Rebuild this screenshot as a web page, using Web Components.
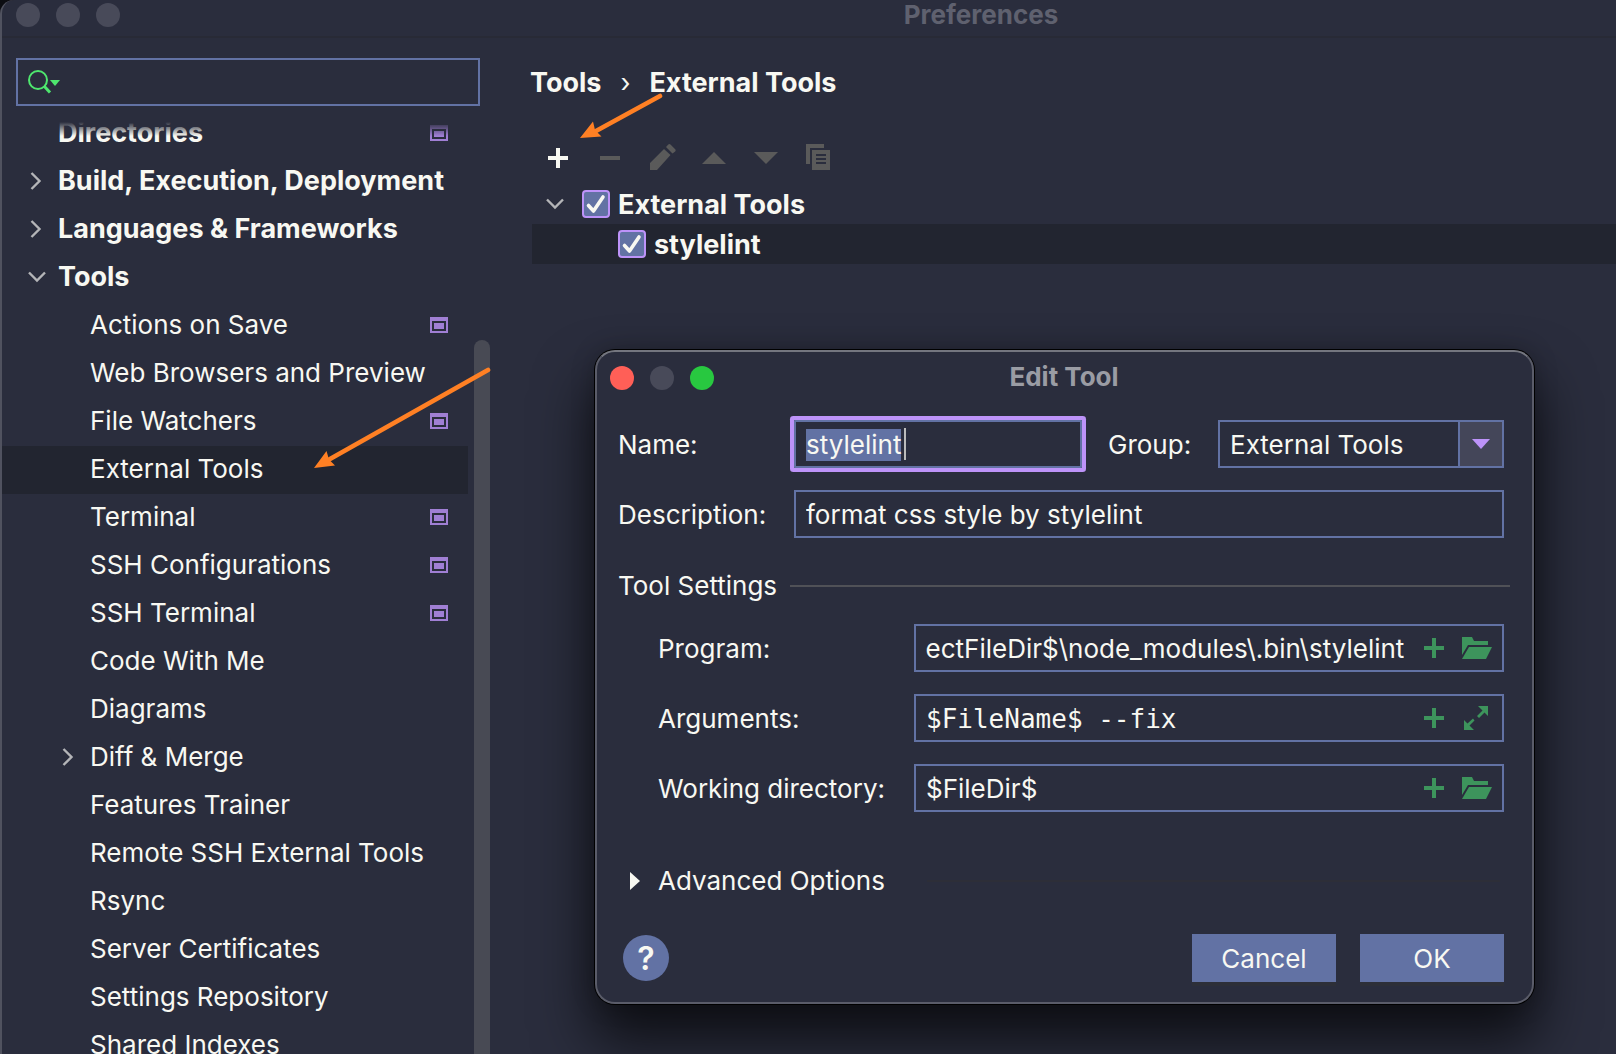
<!DOCTYPE html>
<html lang="en">
<head>
<meta charset="utf-8">
<title>Preferences</title>
<style>
  :root {
    --bg: #2a2d3d;
    --selected: #222530;
    --text: #f8f8f2;
    --line: #6272a4;
    --accent: #bd93f9;
    --badge: #a07fd4;
    --green: #3d945c;
    --disabled: #5a5a5a;
    --muted: #b4b5b8;
    --strong: 27px;
  }
  html, body { height: 100%; }
  body {
    margin: 0;
    overflow: hidden;
    background: #0c0d12;
    color: var(--text);
    font: 26px/32px Inter, "Liberation Sans", sans-serif;
  }
</style>
</head>
<body>
<preferences-window></preferences-window>

<script>
const define = (name, html, setup) => {
  const template = document.createElement('template');
  template.innerHTML = html;
  customElements.define(name, class extends HTMLElement {
    connectedCallback() {
      if (this.shadowRoot) return;
      const root = this.attachShadow({ mode: 'open' });
      root.append(template.content.cloneNode(true));
      if (setup) setup(this, root);
    }
  });
};

/* Icon set: [width, height, markup] */
const ICONS = {
  search: [34, 26, '<circle cx="10" cy="11" r="9" fill="none" stroke="#4ee66e" stroke-width="2"/><path d="M16 17l6 6.500" stroke="#4ee66e" stroke-width="3" fill="none"/><path d="M22 11h10l-5 6z" fill="#4ee66e"/>'],
  right: [18, 18, '<path d="M3.500 1l8 8-8 8" fill="none" stroke="currentColor" stroke-width="2.400"/>'],
  down: [18, 18, '<path d="M1 4.500l8 8 8-8" fill="none" stroke="currentColor" stroke-width="2.400"/>'],
  project: [18, 16, '<path fill-rule="evenodd" d="M0 0h18v16H0zM2 4v10h14V4z" fill="currentColor"/><path d="M4 6h10v6H4z" fill="currentColor"/>'],
  plus: [20, 20, '<path d="M8 0h4v8h8v4h-8v8H8v-8H0V8h8z" fill="currentColor"/>'],
  minus: [20, 20, '<path d="M0 8h20v4H0z" fill="currentColor"/>'],
  edit: [28, 28, '<path d="M16 5l6.500 6L9 26H2v-7zM18 3l2.300-2.400q1-1 2.200 0l4.700 4.600q1 1 0 2.200L24.500 9.500z" fill="currentColor"/>'],
  up: [24, 12, '<path d="M0 12L12 0l12 12z" fill="currentColor"/>'],
  drop: [24, 12, '<path d="M0 0h24L12 12z" fill="currentColor"/>'],
  copy: [24, 28, '<path d="M0 0h18v4H4v16H0z" fill="currentColor"/><path fill-rule="evenodd" d="M6 6h18v20H6zM10 10v2h10v-2zM10 14v2h10v-2zM10 18v2h10v-2z" fill="currentColor"/>'],
  check: [28, 28, '<path d="M6.500 15.500l5 5.500L21 7" fill="none" stroke="currentColor" stroke-width="3.600" stroke-linecap="round" stroke-linejoin="round"/>'],
  caret: [18, 10, '<path d="M0 0h18L9 10z" fill="currentColor"/>'],
  folder: [30, 22, '<path d="M0 0h10l2 4h14v4H6L0 18z" fill="currentColor"/><path d="M7 10h23l-6 12H0z" fill="currentColor"/>'],
  expand: [26, 24, '<path d="M14 0h10v10l-3.500-3.500-5.500 5.500-2-2 5.500-5.500zM10 24H0V14l3.500 3.500 5.500-5 1.500 2-5 5z" fill="currentColor"/>'],
  play: [10, 18, '<path d="M0 0l10 9-10 9z" fill="currentColor"/>']
};

define('ui-icon', `<style>:host{display:block;flex:none}svg{display:block}</style>`, (el, root) => {
  const [w, h, body] = ICONS[el.getAttribute('name')];
  root.innerHTML += `<svg width="${w}" height="${h}" viewBox="0 0 ${w} ${h}" aria-hidden="true">${body}</svg>`;
});

define('traffic-lights', `
<style>
  :host { display: flex; gap: 16px; }
  i { width: 24px; height: 24px; border-radius: 50%; background: #484a59; }
  :host([active]) i:first-of-type { background: #ff5f57; }
  :host([active]) i:last-of-type { background: #28c840; }
</style><i></i><i></i><i></i>`);

define('search-box', `
<style>
  :host { display: flex; align-items: center; gap: 8px; box-sizing: border-box; height: 48px; padding: 0 10px; border: 2px solid var(--line); }
  input { flex: 1; min-width: 0; padding: 0; border: 0; outline: 0; background: none; color: inherit; font: inherit; }
</style>
<ui-icon name="search"></ui-icon><input type="text" aria-label="Search settings">`);

define('tree-item', `
<style>
  :host { display: block; }
  a { display: flex; align-items: center; box-sizing: border-box; height: 48px; padding: 0 20px 2px 26px; color: inherit; text-decoration: none; white-space: nowrap; }
  :host([child]) a { padding-left: 58px; }
  :host([bold]) a { font-size: var(--strong); font-weight: 700; }
  :host([selected]) a { background: var(--selected); }
  .arrow { width: 18px; margin-right: 12px; color: var(--muted); }
  span { flex: 1; }
  .badge { color: var(--badge); }
</style>
<a href="#"><div class="arrow"></div><span><slot></slot></span></a>`, (el, root) => {
  const arrow = el.getAttribute('arrow');
  if (arrow) root.querySelector('.arrow').innerHTML = `<ui-icon name="${arrow}"></ui-icon>`;
  if (el.hasAttribute('badge')) root.querySelector('a').insertAdjacentHTML('beforeend', '<ui-icon class="badge" name="project"></ui-icon>');
});

define('settings-sidebar', `
<style>
  :host { display: flex; flex-direction: column; min-height: 0; padding-top: 20px; box-sizing: border-box; }
  search-box { margin: 0 10px 0 14px; }
  .view { position: relative; display: flex; flex: 1; min-height: 0; margin-top: 16px; overflow: hidden; }
  nav { flex: 1; margin-top: -12px; }
  .fade { position: absolute; inset: 0 24px auto 0; height: 14px; background: linear-gradient(var(--bg), transparent); }
  .track { width: 16px; margin: 218px 0 0 6px; border-radius: 8px 8px 0 0; background: #484a54; }
</style>
<search-box></search-box>
<div class="view">
  <nav aria-label="Settings">
    <tree-item bold badge>Directories</tree-item>
    <tree-item bold arrow="right">Build, Execution, Deployment</tree-item>
    <tree-item bold arrow="right">Languages &amp; Frameworks</tree-item>
    <tree-item bold arrow="down">Tools</tree-item>
    <tree-item child badge>Actions on Save</tree-item>
    <tree-item child>Web Browsers and Preview</tree-item>
    <tree-item child badge>File Watchers</tree-item>
    <tree-item child selected>External Tools</tree-item>
    <tree-item child badge>Terminal</tree-item>
    <tree-item child badge>SSH Configurations</tree-item>
    <tree-item child badge>SSH Terminal</tree-item>
    <tree-item child>Code With Me</tree-item>
    <tree-item child>Diagrams</tree-item>
    <tree-item child arrow="right">Diff &amp; Merge</tree-item>
    <tree-item child>Features Trainer</tree-item>
    <tree-item child>Remote SSH External Tools</tree-item>
    <tree-item child>Rsync</tree-item>
    <tree-item child>Server Certificates</tree-item>
    <tree-item child>Settings Repository</tree-item>
    <tree-item child>Shared Indexes</tree-item>
  </nav>
  <div class="track"></div>
  <div class="fade"></div>
</div>`);

define('tool-button', `
<style>
  :host { display: block; }
  button { display: grid; place-items: center; width: 52px; height: 40px; padding: 0; border: 0; background: none; color: var(--text); }
  button:disabled { color: var(--disabled); }
</style>
<button type="button"></button>`, (el, root) => {
  const button = root.querySelector('button');
  button.disabled = el.hasAttribute('disabled');
  button.setAttribute('aria-label', el.getAttribute('label'));
  button.innerHTML = `<ui-icon name="${el.getAttribute('icon')}"></ui-icon>`;
});

define('check-item', `
<style>
  :host { display: flex; align-items: center; height: 40px; padding-left: 14px; font-size: var(--strong); font-weight: 700; }
  :host([child]) { padding-left: 50px; background: var(--selected); }
  .arrow { width: 18px; margin-right: 18px; color: var(--muted); }
  label { display: flex; align-items: center; gap: 8px; }
  .name { padding-top: 2px; }
  .box { display: grid; color: var(--text); }
  .box > * { grid-area: 1 / 1; }
  input { appearance: none; box-sizing: border-box; width: 28px; height: 28px; margin: 0; border: 2px solid var(--accent); border-radius: 4px; background: var(--line); }
  ui-icon { pointer-events: none; }
  input:not(:checked) + ui-icon { visibility: hidden; }
</style>
<div class="arrow"></div>
<label><span class="box"><input type="checkbox" checked><ui-icon name="check"></ui-icon></span><span class="name"><slot></slot></span></label>`, (el, root) => {
  if (!el.hasAttribute('child')) root.querySelector('.arrow').innerHTML = '<ui-icon name="down"></ui-icon>';
});

define('tools-panel', `
<style>
  :host { display: block; padding: 29px 0 0 42px; }
  .crumbs { display: flex; height: 32px; margin-left: -2px; font-size: var(--strong); font-weight: 700; white-space: pre; }
  .crumbs span { width: 48px; text-align: center; font-size: 26px; font-weight: 400; }
  .bar { display: flex; margin: 39px 0 6px; }
</style>
<div class="crumbs">Tools<span>›</span>External Tools</div>
<div class="bar" role="toolbar">
  <tool-button icon="plus" label="Add"></tool-button>
  <tool-button icon="minus" label="Remove" disabled></tool-button>
  <tool-button icon="edit" label="Edit" disabled></tool-button>
  <tool-button icon="up" label="Move up" disabled></tool-button>
  <tool-button icon="drop" label="Move down" disabled></tool-button>
  <tool-button icon="copy" label="Copy" disabled></tool-button>
</div>
<check-item>External Tools</check-item>
<check-item child>stylelint</check-item>`);

define('text-field', `
<style>
  :host { display: grid; grid-template-columns: var(--label, 176px) 1fr; align-items: center; }
  label { padding-top: 2px; }
  .box { position: relative; display: flex; align-items: center; box-sizing: border-box; min-width: 0; height: 48px; padding: 0 10px; border: 2px solid var(--line); }
  input { flex: 1; min-width: 0; height: 32px; padding: 2px 0 0; border: 0; outline: 0; background: none; color: inherit; font: inherit; }
  input::selection { background: var(--line); color: var(--text); }
  :host([mono]) input { font-family: "DejaVu Sans Mono", monospace; }
  :host([active]) .box { box-shadow: 0 0 0 4px var(--accent); border-radius: 1px; }
  :host([active]) .box::after { content: ""; position: absolute; left: 108px; top: 6px; width: 2px; height: 32px; background: #bbb; }
  .icons { display: flex; gap: 18px; margin-left: 20px; }
  .icons button { display: grid; place-items: center; padding: 0; border: 0; background: none; color: var(--green); }
  .icons button:last-child { width: 30px; }
</style>
<label for="field"></label><div class="box"><input id="field" type="text"></div>`, (el, root) => {
  const input = root.querySelector('input');
  root.querySelector('label').textContent = el.getAttribute('label');
  input.value = el.getAttribute('value');
  const icon = el.getAttribute('icon');
  if (icon) root.querySelector('.box').insertAdjacentHTML('beforeend',
    `<div class="icons"><button type="button" aria-label="Insert macro"><ui-icon name="plus"></ui-icon></button><button type="button" aria-label="${icon}"><ui-icon name="${icon}"></ui-icon></button></div>`);
  if (el.hasAttribute('active')) { input.focus(); input.select(); }
  if (el.hasAttribute('scrolled')) {
    const toEnd = () => { input.scrollLeft = input.scrollWidth; };
    toEnd();
    requestAnimationFrame(toEnd);
  }
});

define('combo-field', `
<style>
  :host { display: grid; grid-template-columns: 110px 1fr; align-items: center; }
  label { padding-top: 2px; }
  .box { display: grid; grid-template-columns: 1fr 46px; }
  select { grid-area: 1 / 1 / 2 / 3; appearance: none; box-sizing: border-box; width: 100%; height: 48px; padding: 2px 56px 0 10px; border: 2px solid var(--line); border-radius: 0; outline: 0; background: none; color: inherit; font: inherit; }
  .arrow { grid-area: 1 / 2; display: grid; place-items: center; border: 2px solid var(--line); background: #444659; color: var(--accent); pointer-events: none; }
</style>
<label for="combo">Group:</label>
<div class="box"><select id="combo"><option>External Tools</option></select><div class="arrow"><ui-icon name="caret"></ui-icon></div></div>`);

define('push-button', `
<style>
  button { display: block; width: 144px; height: 48px; padding: 2px 0 0; border: 0; background: var(--line); box-shadow: 0 4px #2d2f38; color: var(--text); font: inherit; }
  :host([round]) button { width: 46px; height: 46px; border-radius: 50%; box-shadow: none; font-size: 32px; font-weight: 600; }
</style>
<button type="button"><slot></slot></button>`);

define('edit-dialog', `
<style>
  :host { display: block; box-sizing: border-box; border: 2px solid #5a5c69; border-top-color: #74767f; border-radius: 20px; background: var(--bg);
    box-shadow: 0 0 0 1px #000, 0 34px 56px 4px rgba(0,0,0,.66), 0 0 24px rgba(0,0,0,.22); }
  header { display: grid; grid-template-columns: 1fr auto 1fr; align-items: center; height: 52px; padding: 0 13px; }
  h2 { margin: 0; padding-bottom: 2px; font: inherit; font-weight: 700; color: #9a9ca4; }
  form { display: flex; flex-direction: column; gap: 22px; padding: 16px 27px 20px 21px; }
  .pair { display: grid; grid-template-columns: 464px 1fr; gap: 26px; }
  .rule { display: flex; align-items: center; gap: 13px; box-sizing: border-box; height: 50px; padding-top: 2px; margin: 0 -6px -8px 0; }
  .rule::after { content: ""; flex: 1; height: 2px; background: #505157; }
  .inset { --label: 256px; padding-left: 40px; }
  .advanced { display: flex; align-items: center; height: 40px; margin: 27px 4px 11px 0; padding: 0 0 0 12px; border: 0; background: none; color: inherit; font: inherit; gap: 18px; }
  .advanced::after { content: ""; flex: 1; height: 2px; margin-left: 24px; background: #2d2e38; }
  footer { display: flex; align-items: center; gap: 24px; padding-left: 5px; }
  footer push-button:first-child { margin-right: auto; }
</style>
<header><traffic-lights active></traffic-lights><h2>Edit Tool</h2></header>
<form>
  <div class="pair">
    <text-field active label="Name:" value="stylelint"></text-field>
    <combo-field></combo-field>
  </div>
  <text-field label="Description:" value="format css style by stylelint"></text-field>
  <div class="rule">Tool Settings</div>
  <text-field class="inset" scrolled label="Program:" value="$ProjectFileDir$\\node_modules\\.bin\\stylelint" icon="folder"></text-field>
  <text-field class="inset" mono label="Arguments:" value="$FileName$ --fix" icon="expand"></text-field>
  <text-field class="inset" label="Working directory:" value="$FileDir$" icon="folder"></text-field>
  <button type="button" class="advanced"><ui-icon name="play"></ui-icon>Advanced Options</button>
  <footer><push-button round>?</push-button><push-button>Cancel</push-button><push-button>OK</push-button></footer>
</form>`);

/* Annotation arrows drawn over both windows */
define('callout-arrows', `
<style>
  :host { display: block; pointer-events: none; }
  svg { display: block; overflow: visible; }
</style>
<svg width="700" height="500" viewBox="0 0 700 500" fill="#ff8024" aria-hidden="true">
  <path d="M660 96L596 131M488 370L330 459" stroke="#ff8024" stroke-width="4.600" stroke-linecap="round"/>
  <path d="M580 138L593 121.500L595 130L601.500 136.500zM314 468L326.500 451L329 459.500L335 465.500z"/>
</svg>`);

define('preferences-window', `
<style>
  :host { position: relative; display: flex; flex-direction: column; box-sizing: border-box; height: 100vh; overflow: hidden; border-left: 2px solid #50525f; border-top-left-radius: 14px; background: var(--bg); }
  header { display: flex; align-items: center; box-sizing: border-box; flex: none; height: 38px; padding: 0 0 6px 14px; border-bottom: 2px solid #282a36; }
  h1 { flex: 1; margin: 0; padding-left: 226px; font: inherit; font-weight: 700; text-align: center; color: #5f616f; }
  main { display: grid; grid-template-columns: 488px 1fr; flex: 1; min-height: 0; }
  edit-dialog { position: absolute; left: 593px; right: 82px; top: 350px; }
  callout-arrows { position: absolute; left: -2px; top: 0; }
  edit-dialog { padding-right: 1px; }
</style>
<header><traffic-lights></traffic-lights><h1>Preferences</h1></header>
<main><settings-sidebar></settings-sidebar><tools-panel></tools-panel></main>
<edit-dialog></edit-dialog>
<callout-arrows></callout-arrows>`);
</script>
</body>
</html>
